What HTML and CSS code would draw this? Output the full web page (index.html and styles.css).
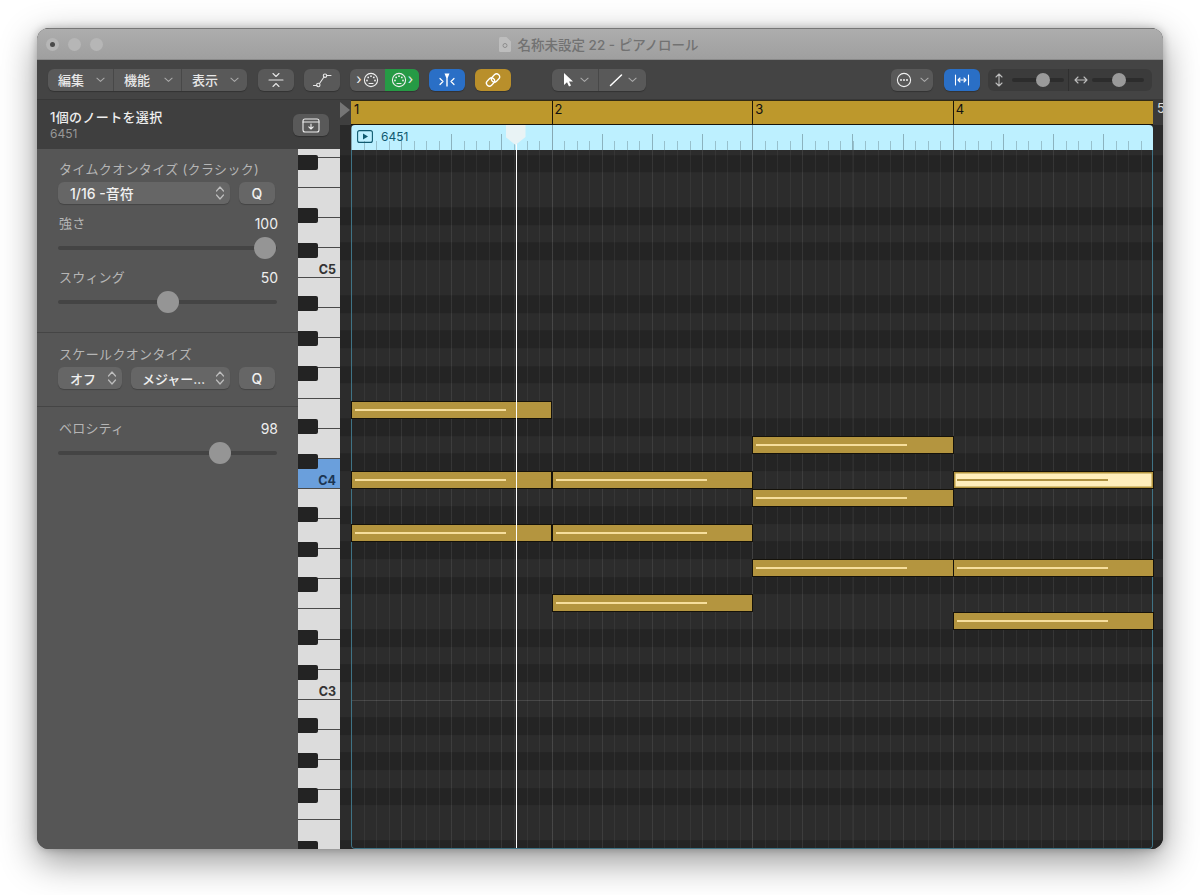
FILE: index.html
```html
<!DOCTYPE html>
<html lang="ja">
<head>
<meta charset="utf-8">
<title>名称未設定 22 - ピアノロール</title>
<link rel="stylesheet" href="styles.css">
</head>
<body>
<svg class="sprite" aria-hidden="true">
  <symbol id="chev" viewBox="0 0 10 6"><path d="M1 1l4 3.6L9 1" fill="none" stroke="currentColor" stroke-width="1.2" stroke-linecap="round" stroke-linejoin="round"/></symbol>
  <symbol id="updown" viewBox="0 0 10 16"><path d="M1.5 6L5 2l3.5 4M1.5 10L5 14l3.5-4" fill="none" stroke="currentColor" stroke-width="1.2" stroke-linecap="round" stroke-linejoin="round"/></symbol>
  <symbol id="midi" viewBox="0 0 16 16"><circle cx="8" cy="8" r="6.6" fill="none" stroke="currentColor" stroke-width="1.1"/><g fill="currentColor"><circle cx="4" cy="8.500" r=".9"/><circle cx="5.200" cy="5.400" r=".9"/><circle cx="8" cy="4.200" r=".9"/><circle cx="10.800" cy="5.400" r=".9"/><circle cx="12" cy="8.500" r=".9"/></g><path d="M6 11.500h4" stroke="currentColor" stroke-width="1.100" stroke-linecap="round"/></symbol>
</svg>
<main class="window">
  <header class="titlebar">
    <div class="lights"><span class="light light-dot"></span><span class="light"></span><span class="light"></span></div>
    <div class="title">
      <svg class="doc" viewBox="0 0 12 15"><path d="M1.5 0h6L12 4.5V13.5a1.5 1.5 0 0 1-1.5 1.5h-9A1.5 1.5 0 0 1 0 13.5V1.5A1.5 1.5 0 0 1 1.5 0z" fill="#bdbdbd"/><circle cx="6" cy="8.5" r="2" fill="none" stroke="#8d8d8d"/></svg>
      <span>名称未設定 22 - ピアノロール</span>
    </div>
  </header>

  <nav class="toolbar">
    <div class="seg menu-seg">
      <button class="seg-item menu-item w-66">編集<svg class="chev"><use href="#chev"/></svg></button>
      <button class="seg-item menu-item w-68">機能<svg class="chev"><use href="#chev"/></svg></button>
      <button class="seg-item menu-item w-65">表示<svg class="chev"><use href="#chev"/></svg></button>
    </div>
    <button class="tb-btn">
      <svg class="ic" viewBox="0 0 20 16"><path d="M3 8h14M7 1.500L10 4.500l3-3M7 14.500L10 11.500l3 3" fill="none" stroke="#e6e6e6" stroke-width="1.100" stroke-linecap="round" stroke-linejoin="round"/></svg>
    </button>
    <button class="tb-btn">
      <svg class="ic" viewBox="0 0 20 16"><path d="M1.500 13.500H5M7.500 11.500L12 5M14.800 3.500H19" fill="none" stroke="#e6e6e6" stroke-width="1.100" stroke-linecap="round"/><circle cx="6.300" cy="13" r="1.700" fill="none" stroke="#e6e6e6" stroke-width="1.100"/><circle cx="13" cy="3.700" r="1.700" fill="none" stroke="#e6e6e6" stroke-width="1.100"/></svg>
    </button>
    <div class="seg midi-seg">
      <button class="seg-item midi-in"><span class="gt">›</span><svg class="midi"><use href="#midi"/></svg></button>
      <button class="seg-item midi-out"><svg class="midi"><use href="#midi"/></svg><span class="gt">›</span></button>
    </div>
    <button class="tb-btn blue">
      <svg class="ic" viewBox="0 0 20 16"><path d="M7.500 1.500h5L10.700 6v8.500h-1.400V6z" fill="#fff"/><path d="M3 6.500L6 9.500l-3 3M17 6.500L14 9.500l3 3" fill="none" stroke="#fff" stroke-width="1.200" stroke-linecap="round" stroke-linejoin="round"/></svg>
    </button>
    <button class="tb-btn gold">
      <svg class="ic" viewBox="0 0 20 16"><g fill="none" stroke="#fff" stroke-width="1.300"><rect x="3" y="7" width="9" height="6" rx="3" transform="rotate(-45 7.500 10)"/><rect x="8" y="3" width="9" height="6" rx="3" transform="rotate(-45 12.500 6)"/></g></svg>
    </button>
    <div class="seg tool-seg">
      <button class="seg-item tool-item w-47">
        <svg class="tool" viewBox="0 0 14 16"><path d="M3 1v12l3-2.800 2 4.300 2-.9-2-4.200h4z" fill="#fff"/></svg><svg class="chev"><use href="#chev"/></svg>
      </button>
      <button class="seg-item tool-item w-47">
        <svg class="tool" viewBox="0 0 14 16"><path d="M1.500 13.500L12.500 3" stroke="#fff" stroke-width="1.500" stroke-linecap="round"/></svg><svg class="chev"><use href="#chev"/></svg>
      </button>
    </div>
    <div class="right-tools">
      <button class="tb-btn more">
        <svg class="more-ic" viewBox="0 0 16 16"><circle cx="8" cy="8" r="6.600" fill="none" stroke="#eee" stroke-width="1.100"/><g fill="#eee"><circle cx="5" cy="8" r="1"/><circle cx="8" cy="8" r="1"/><circle cx="11" cy="8" r="1"/></g></svg>
        <svg class="chev"><use href="#chev"/></svg>
      </button>
      <button class="tb-btn blue">
        <svg class="ic" viewBox="0 0 20 16"><path d="M3.500 3v10M16.500 3v10M6 8h8M8 6L6 8l2 2M12 6l2 2-2 2" fill="none" stroke="#fff" stroke-width="1.100" stroke-linecap="round" stroke-linejoin="round"/></svg>
      </button>
      <div class="zoom-well">
        <div class="zoom-part part-v">
          <svg class="zoom-ic-v" viewBox="0 0 10 16"><path d="M2 5l3-3 3 3M2 11l3 3 3-3M5 2v12" fill="none" stroke="#bdbdbd" stroke-width="1.100" stroke-linecap="round" stroke-linejoin="round"/></svg>
          <div class="mini-track"><span class="mini-thumb thumb-v"></span></div>
        </div>
        <div class="zoom-part part-h">
          <svg class="zoom-ic-h" viewBox="0 0 16 10"><path d="M5 2L2 5l3 3M11 2l3 3-3 3M2 5h12" fill="none" stroke="#bdbdbd" stroke-width="1.100" stroke-linecap="round" stroke-linejoin="round"/></svg>
          <div class="mini-track"><span class="mini-thumb thumb-h"></span></div>
        </div>
      </div>
    </div>
  </nav>

  <div class="workspace">
    <aside class="side">
      <div class="side-head">
        <div>
          <div class="sel-title">1個のノートを選択</div>
          <div class="sel-sub">6451</div>
        </div>
        <button class="tb-btn">
          <svg class="ic-save" viewBox="0 0 18 15"><rect x="1" y="1" width="16" height="13" rx="2" fill="none" stroke="#eee" stroke-width="1.100"/><path d="M1 4h16M9 6v5M6.800 8.800L9 11l2.200-2.200" fill="none" stroke="#eee" stroke-width="1.100" stroke-linecap="round" stroke-linejoin="round"/></svg>
        </button>
      </div>
      <div class="side-body">
        <div class="inspector">
          <section class="sec sec-time">
            <h2 class="sec-title">タイムクオンタイズ (クラシック)</h2>
            <div class="ctl-row">
              <button class="pop pop-wide">1/16 -音符<svg class="updown"><use href="#updown"/></svg></button>
              <button class="q">Q</button>
            </div>
            <div class="val-row val-strength"><span class="lbl">強さ</span><span class="val">100</span></div>
            <div class="slider"><span class="knob" style="left:196px"></span></div>
            <div class="val-row val-swing"><span class="lbl">スウィング</span><span class="val">50</span></div>
            <div class="slider"><span class="knob" style="left:98.5px"></span></div>
          </section>
          <section class="sec sec-scale">
            <h2 class="sec-title">スケールクオンタイズ</h2>
            <div class="ctl-row">
              <button class="pop pop-off">オフ<svg class="updown"><use href="#updown"/></svg></button>
              <button class="pop pop-major">メジャー…<svg class="updown"><use href="#updown"/></svg></button>
              <button class="q">Q</button>
            </div>
          </section>
          <section class="sec sec-vel">
            <div class="val-row"><span class="lbl">ベロシティ</span><span class="val">98</span></div>
            <div class="slider"><span class="knob" style="left:151px"></span></div>
          </section>
        </div>
        <div class="piano">
          <div class="wk wk-first"></div>
          <div class="wk"></div><div class="wk"></div><div class="wk"></div>
          <div class="wk">C5</div>
          <div class="wk"></div><div class="wk"></div><div class="wk"></div><div class="wk"></div><div class="wk"></div><div class="wk"></div>
          <div class="wk wk-active">C4</div>
          <div class="wk"></div><div class="wk"></div><div class="wk"></div><div class="wk"></div><div class="wk"></div><div class="wk"></div>
          <div class="wk">C3</div>
          <div class="wk"></div><div class="wk"></div><div class="wk"></div><div class="wk"></div>
          <div class="wk wk-last"></div>
          <span class="bk" style="--n:18"></span><span class="bk" style="--n:15"></span><span class="bk" style="--n:13"></span>
          <span class="bk" style="--n:10"></span><span class="bk" style="--n:8"></span><span class="bk" style="--n:6"></span>
          <span class="bk" style="--n:3"></span><span class="bk" style="--n:1"></span>
          <span class="bk" style="--n:-2"></span><span class="bk" style="--n:-4"></span><span class="bk" style="--n:-6"></span>
          <span class="bk" style="--n:-9"></span><span class="bk" style="--n:-11"></span>
          <span class="bk" style="--n:-14"></span><span class="bk" style="--n:-16"></span><span class="bk" style="--n:-18"></span>
          <span class="bk" style="--n:-21"></span>
        </div>
      </div>
    </aside>

    <section class="roll">
      <div class="ruler-row">
        <div class="ruler-gutter"><span class="locator"></span></div>
        <div class="ruler">
          <span class="bar">1</span><span class="bar">2</span><span class="bar">3</span><span class="bar">4</span>
        </div>
        <div class="ruler-end"><span class="bar5">5</span></div>
      </div>
      <div class="region-row">
        <div class="region">
          <svg class="play" viewBox="0 0 16 13"><rect x=".6" y=".6" width="14.800" height="11.800" rx="2" fill="none" stroke="#0f5a70" stroke-width="1.100"/><path d="M6 3.500v6l5-3z" fill="#0f5a70"/></svg>
          <span class="region-name">6451</span>
        </div>
      </div>
      <div class="lanes">
        <div class="grid">
          <div class="note" style="--bar:0;--n:4"><i></i></div>
          <div class="note" style="--bar:2;--n:2"><i></i></div>
          <div class="note" style="--bar:0;--n:0"><i></i></div>
          <div class="note" style="--bar:1;--n:0"><i></i></div>
          <div class="note note-sel" style="--bar:3;--n:0"><i></i></div>
          <div class="note" style="--bar:2;--n:-1"><i></i></div>
          <div class="note" style="--bar:0;--n:-3"><i></i></div>
          <div class="note" style="--bar:1;--n:-3"><i></i></div>
          <div class="note" style="--bar:2;--n:-5"><i></i></div>
          <div class="note" style="--bar:3;--n:-5"><i></i></div>
          <div class="note" style="--bar:1;--n:-7"><i></i></div>
          <div class="note" style="--bar:3;--n:-8"><i></i></div>
        </div>
      </div>
      <div class="playhead"><span class="playhead-cap"></span></div>
    </section>
  </div>
</main>
</body>
</html>
```

FILE: styles.css
```css
* { box-sizing: border-box; margin: 0; padding: 0; }
html, body { height: 100%; }
body {
  background: #fff;
  padding: 28px 37px 46px;
  overflow: hidden;
  font-family: Inter, "Noto Sans CJK JP", "Liberation Sans", sans-serif;
  font-size: 13px;
  color: #eee;
}
button { font: inherit; color: inherit; border: 0; background: none; }
.sprite { position: absolute; width: 0; height: 0; }

.window {
  width: 1126px;
  height: 821px;
  display: flex;
  flex-direction: column;
  border-radius: 12px;
  overflow: hidden;
  background: #444;
  box-shadow: 0 12px 36px rgba(0,0,0,.42), 0 0 8px rgba(0,0,0,.25);
}

/* Title bar */
.titlebar {
  height: 32px;
  flex: none;
  display: grid;
  grid-template-columns: 1fr auto 1fr;
  align-items: center;
  background: linear-gradient(#adadad, #9f9f9f);
  border-top: 1px solid #777;
  border-bottom: 1px solid #8a8a8a;
}
.lights { display: flex; gap: 9px; padding-left: 9px; grid-column: 1; }
.light { width: 13px; height: 13px; border-radius: 50%; background: #b6b6b6; display: flex; align-items: center; justify-content: center; }
.light-dot::after { content: ""; width: 5px; height: 5px; border-radius: 50%; background: #4a4a4a; }
.title {
  grid-column: 2;
  display: flex;
  align-items: center;
  gap: 7px;
  padding-right: 3px;
  color: #727272;
  font-weight: 500;
  font-size: 13.5px;
}
.doc { width: 12px; height: 15px; }

/* Toolbar */
.toolbar {
  height: 40px;
  flex: none;
  display: flex;
  align-items: center;
  gap: 10px;
  padding: 0 11px;
  background: #444;
  border-bottom: 1px solid #383838;
}
.seg, .tb-btn {
  height: 22px;
  border-radius: 6px;
  background: #595959;
  display: flex;
  align-items: stretch;
  overflow: hidden;
  box-shadow: 0 1px 1px rgba(0,0,0,.25);
}
.tb-btn { width: 36px; flex: none; align-items: center; justify-content: center; }
.blue { background: #2a6fc6; }
.gold { background: #b98f2b; }
.seg-item { display: flex; align-items: center; border-right: 1px solid #484848; }
.seg-item:last-child { border-right: 0; }
.menu-seg { margin-right: 1px; }
.menu-item { justify-content: space-between; padding: 0 8px 0 10px; color: #e8e8e8; font-weight: 500; }
.w-66 { width: 66px; }
.w-68 { width: 68px; }
.w-65 { width: 65px; }
.w-47 { width: 47px; }
.chev { width: 9px; height: 6px; color: #aaa; }
.ic { width: 20px; height: 16px; }
.midi { width: 16px; height: 16px; color: #eee; }
.gt { font-size: 14px; line-height: 1; margin-top: -2px; color: #eee; }
.midi-seg { width: 69px; }
.midi-in { width: 35px; justify-content: center; gap: 1px; border: 0; }
.midi-out { width: 34px; justify-content: center; gap: 1px; background: #269a45; }
.tool-seg { width: 94px; margin-left: 31px; }
.tool-item { justify-content: center; gap: 5px; }
.tool { width: 14px; height: 16px; }
.right-tools { margin-left: auto; display: flex; align-items: center; gap: 11px; }
.more { width: 42px; gap: 8px; }
.more-ic { width: 16px; height: 16px; }
.zoom-well {
  width: 164px;
  height: 22px;
  margin-left: -3px;
  display: flex;
  background: #3b3b3b;
  border-radius: 6px;
}
.zoom-part { display: flex; align-items: center; }
.part-v { width: 81px; padding-left: 6px; gap: 8px; border-right: 1px solid #2f2f2f; }
.part-h { width: 83px; padding-left: 4px; gap: 3px; }
.zoom-ic-v { width: 10px; height: 16px; }
.zoom-ic-h { width: 16px; height: 10px; }
.mini-track { position: relative; width: 52px; height: 4px; border-radius: 2px; background: #2c2c2c; }
.mini-thumb { position: absolute; top: -5px; width: 14px; height: 14px; border-radius: 50%; background: #9a9a9a; }
.thumb-v { left: 24px; }
.thumb-h { left: 20px; }

/* Workspace */
.workspace { flex: 1; min-height: 0; display: flex; }
.side { width: 303px; flex: none; display: flex; flex-direction: column; }
.side-head {
  height: 49px;
  flex: none;
  display: flex;
  align-items: center;
  justify-content: space-between;
  padding: 1px 11px 0 13px;
  background: #3f3f3f;
}
.sel-title { font-size: 13px; font-weight: 500; line-height: 17px; letter-spacing: .35px; color: #eee; }
.sel-sub { font-size: 12px; line-height: 15px; color: #979797; }
.ic-save { width: 18px; height: 15px; }
.side-body { flex: 1; min-height: 0; display: flex; }

/* Inspector */
.inspector { width: 261px; flex: none; background: #565656; }
.sec { padding: 0 21px; border-bottom: 1px solid #454545; }
.sec-time { height: 184px; padding-top: 12px; }
.sec-scale { height: 74px; padding-top: 13px; }
.sec-vel { border: 0; padding-top: 13px; }
.sec-title { padding-left: 1px; font-size: 13px; font-weight: 400; line-height: 17px; letter-spacing: .35px; color: #b5b5b5; white-space: nowrap; }
.ctl-row { display: flex; gap: 9px; margin-top: 4px; }
.pop, .q {
  height: 22px;
  border-radius: 6px;
  background: #666;
  box-shadow: 0 1px 1px rgba(0,0,0,.22);
  display: flex;
  align-items: center;
  color: #f0f0f0;
}
.pop { justify-content: space-between; padding: 0 5px 0 12px; font-weight: 500; }
.pop-wide { width: 172px; font-size: 14px; }
.pop-off { width: 64px; }
.pop-major { width: 99px; padding-left: 11px; }
.q { width: 36px; justify-content: center; font-weight: 500; font-size: 14px; }
.updown { width: 10px; height: 16px; color: #bdbdbd; }
.val-row { display: flex; justify-content: space-between; line-height: 17px; }
.val-strength { margin-top: 11px; }
.val-swing { margin-top: 19px; }
.lbl { padding-left: 1px; letter-spacing: .2px; color: #b5b5b5; }
.val { font-size: 14px; margin-right: -1px; color: #eee; }
.slider { position: relative; height: 4px; margin-top: 14px; border-radius: 2px; background: #444; }
.knob { position: absolute; top: -9px; width: 22px; height: 22px; border-radius: 50%; background: #959595; }

/* Piano */
.piano { position: relative; width: 42px; flex: none; display: flex; flex-direction: column; overflow: hidden; background: #ddd; }
.wk {
  height: 30.14px;
  flex: none;
  display: flex;
  align-items: flex-end;
  justify-content: flex-end;
  padding-right: 4px;
  background: #dcdcdc;
  border-bottom: 1px solid #4a4a4a;
  font-size: 12.5px;
  font-weight: 700;
  line-height: 15px;
  color: #333;
}
.wk-first { height: 8.5px; }
.wk-active { background: #6a9fdc; color: #1c3553; }
.wk-last { flex: 1; border: 0; }
.bk {
  position: absolute;
  left: 0;
  top: calc(322.7px - var(--n) * 17.58px);
  width: 20px;
  height: 15px;
  background: #232323;
  border-radius: 0 2px 2px 0;
}

/* Roll */
.roll { position: relative; flex: 1; min-width: 0; display: flex; flex-direction: column; background: #282828; }
.ruler-row { height: 25px; flex: none; display: flex; background: #3f3f3f; }
.ruler-gutter { width: 11px; flex: none; position: relative; }
.locator {
  position: absolute; left: 0; top: 2px;
  border-left: 10px solid #757575;
  border-top: 8px solid transparent;
  border-bottom: 8px solid transparent;
}
.ruler {
  flex: none;
  width: 802px;
  display: flex;
  background: #bd982c;
  border-bottom: 1px solid #17130a;
  border-top: 1px solid #332b14;
}
.bar {
  width: 200.6px;
  flex: none;
  padding: 2px 0 0 2px;
  font-size: 13px;
  line-height: 13px;
  color: #111;
  border-left: 1px solid #1b1608;
}
.bar:first-child { border-left-color: #bd982c; }
.ruler-end { flex: 1; overflow: hidden; padding-left: 4px; background: #3a3a3a; }
.bar5 { font-size: 13px; line-height: 16px; color: #ddd; }
.region-row { height: 25px; flex: none; padding: 0 10px 0 11px; background: #2a2a2a; }
.region {
  height: 25px;
  display: flex;
  align-items: flex-start;
  padding: 5px 0 0 6px;
  border-radius: 4px 4px 0 0;
  background-color: #bdf0ff;
  background-image:
    repeating-linear-gradient(90deg, #86a8b3 0 1px, transparent 1px 200.6px),
    repeating-linear-gradient(90deg, #8bb2be 0 1px, transparent 1px 50.15px),
    repeating-linear-gradient(90deg, #98c0cc 0 1px, transparent 1px 12.54px);
  background-size: 100% 100%, 100% 16px, 100% 9px;
  background-position: 0 0, 0 100%, 0 100%;
  background-repeat: no-repeat;
}
.play { width: 16px; height: 13px; }
.region-name { margin-left: 8px; font-size: 12px; line-height: 13px; color: #0f5a70; }

.lanes {
  --row: 17.58px;
  flex: 1;
  min-height: 0;
  padding: 0 10px 0 11px;
  background: linear-gradient(
    #2c2c2c 0 calc(var(--row) * 2),
    #242424 0 calc(var(--row) * 3),
    #2c2c2c 0 calc(var(--row) * 4),
    #242424 0 calc(var(--row) * 5),
    #2c2c2c 0 calc(var(--row) * 6),
    #242424 0 calc(var(--row) * 7),
    #2c2c2c 0 calc(var(--row) * 9),
    #242424 0 calc(var(--row) * 10),
    #2c2c2c 0 calc(var(--row) * 11),
    #242424 0 calc(var(--row) * 12)
  ) 0 110.24px / 100% 210.96px repeat-y;
}
.grid {
  position: relative;
  height: 100%;
  border-radius: 0 0 4px 4px;
  box-shadow: inset 1px 0 #3f7385, inset -1px 0 #3f7385, inset 0 -1px #3f7385;
  background-image:
    linear-gradient(rgba(255,255,255,.13), rgba(255,255,255,.13)),
    repeating-linear-gradient(90deg, rgba(255,255,255,.05) 0 1px, transparent 1px 200.6px),
    repeating-linear-gradient(90deg, rgba(255,255,255,.035) 0 1px, transparent 1px 50.15px),
    repeating-linear-gradient(90deg, rgba(255,255,255,.05) 0 1px, transparent 1px 12.54px);
  background-size: 100% 1px, auto, auto, auto;
  background-position: 0 550px, 0 0, 0 0, 0 0;
  background-repeat: no-repeat, repeat, repeat, repeat;
}
.note {
  position: absolute;
  left: calc(var(--bar) * 200.6px);
  top: calc(321.4px - var(--n) * 17.58px);
  width: 201.4px;
  height: 18px;
  display: flex;
  align-items: center;
  padding-left: 3px;
  background: #b4953f;
  border: 1px solid #15120a;
}
.note i { display: block; width: 151px; height: 2px; background: #f6de9c; }
.note-sel { background: #ffeebb; box-shadow: inset 0 0 0 1.5px #b4953f; }
.note-sel i { background: #ad9040; }

.playhead { position: absolute; left: 175.5px; top: 25px; bottom: 1px; width: 1px; background: #fff; }
.playhead-cap {
  position: absolute;
  left: -10px;
  top: 0;
  width: 20px;
  height: 20px;
  background: #e9f3f5;
  clip-path: polygon(0 0, 100% 0, 100% 60%, 50% 100%, 0 60%);
}
```
